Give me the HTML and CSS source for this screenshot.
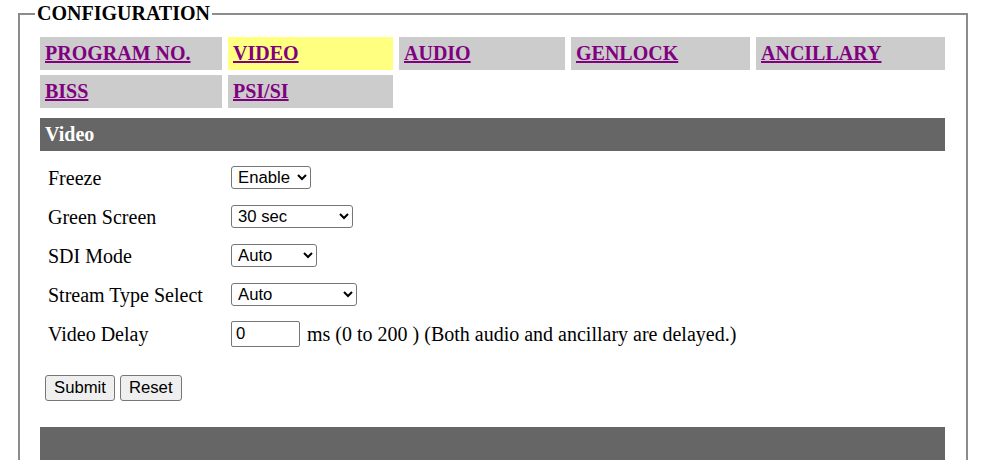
FILE: index.html
```html
<!DOCTYPE html>
<html>
<head>
<meta charset="utf-8">
<title>Configuration</title>
<link rel="stylesheet" href="styles.css">
</head>
<body>
<fieldset class="config">
  <legend class="config-title">CONFIGURATION</legend>
  <div class="tabs">
    <a class="tab" href="#">PROGRAM NO.</a>
    <a class="tab active" href="#">VIDEO</a>
    <a class="tab" href="#">AUDIO</a>
    <a class="tab" href="#">GENLOCK</a>
    <a class="tab" href="#">ANCILLARY</a>
    <a class="tab" href="#">BISS</a>
    <a class="tab" href="#">PSI/SI</a>
  </div>
  <div class="section-head">Video</div>
  <form class="form">
    <div class="rows">
      <div class="label">Freeze</div>
      <div class="ctrl"><select class="sel w-enable"><option>Enable</option><option>Disable</option></select></div>
      <div class="label">Green Screen</div>
      <div class="ctrl"><select class="sel w-green"><option>30 sec</option></select></div>
      <div class="label">SDI Mode</div>
      <div class="ctrl"><select class="sel w-sdi"><option>Auto</option></select></div>
      <div class="label">Stream Type Select</div>
      <div class="ctrl"><select class="sel w-stream"><option>Auto</option></select></div>
      <div class="label">Video Delay</div>
      <div class="ctrl"><input class="num" type="text" value="0"><span class="note">ms (0 to 200 ) (Both audio and ancillary are delayed.)</span></div>
    </div>
    <div class="buttons">
      <button type="button" class="btn">Submit</button>
      <button type="button" class="btn">Reset</button>
    </div>
  </form>
  <div class="section-foot"></div>
</fieldset>
</body>
</html>
```
FILE: styles.css
```css
html, body {
  margin: 0;
  padding: 0;
  background: #fff;
}
body {
  font-family: "Liberation Serif", "Times New Roman", serif;
  font-size: 20px;
  color: #000;
  padding-top: 2px;
}
.config {
  margin: 0 0 0 18px;
  width: 950px;
  box-sizing: border-box;
  border: 2px solid #8c8c8c;
  border-bottom: none;
  padding: 12px 21px 0 20px;
  min-width: 0;
}
.config-title {
  font-weight: bold;
  font-size: 20px;
  line-height: 23px;
  padding: 0 2px;
  margin-left: -5px;
}
.tabs {
  display: grid;
  grid-template-columns: 182px 165px 166px 179px 189px;
  grid-auto-rows: 33px;
  column-gap: 6px;
  row-gap: 5px;
}
.tab {
  display: flex;
  align-items: center;
  padding-left: 5px;
  background: #cccccc;
  color: #800080;
  font-weight: bold;
  font-size: 20px;
  text-decoration: underline;
}
.tab.active {
  background: #ffff80;
}
.section-head {
  margin-top: 10px;
  height: 33px;
  background: #666666;
  color: #fff;
  font-weight: bold;
  font-size: 20px;
  display: flex;
  align-items: center;
  padding-left: 5px;
}
.form {
  margin: 0;
}
.rows {
  display: grid;
  grid-template-columns: 191px auto;
  grid-auto-rows: 39px;
  margin-top: 7px;
}
.label {
  display: flex;
  align-items: center;
  padding-left: 8px;
  padding-top: 2px;
}
.ctrl {
  display: flex;
  align-items: center;
}
.sel {
  font-family: "Liberation Sans", Arial, sans-serif;
  font-size: 16.7px;
  height: 23px;
  margin: 0;
  padding: 0 0 0 2px;
  border: 1px solid #767676;
  border-radius: 3px;
  background: #fff;
  color: #000;
  box-sizing: border-box;
}
.w-enable { width: 80px; }
.w-green { width: 122px; }
.w-sdi { width: 86px; }
.w-stream { width: 126px; }
.num {
  font-family: "Liberation Sans", Arial, sans-serif;
  font-size: 16.7px;
  width: 69px;
  height: 26px;
  box-sizing: border-box;
  margin: 0;
  padding: 0 4px;
  border: 1px solid #767676;
  border-radius: 2px;
}
.note {
  margin-left: 7px;
  padding-top: 2px;
}
.buttons {
  display: flex;
  gap: 5px;
  margin-top: 22px;
  padding-left: 5px;
}
.btn {
  font-family: "Liberation Sans", Arial, sans-serif;
  font-size: 16.7px;
  height: 26px;
  padding: 0 8px;
  margin: 0;
  background: #efefef;
  border: 1px solid #767676;
  border-radius: 3px;
  color: #000;
}
.section-foot {
  margin-top: 26px;
  height: 40px;
  background: #666666;
}
```
